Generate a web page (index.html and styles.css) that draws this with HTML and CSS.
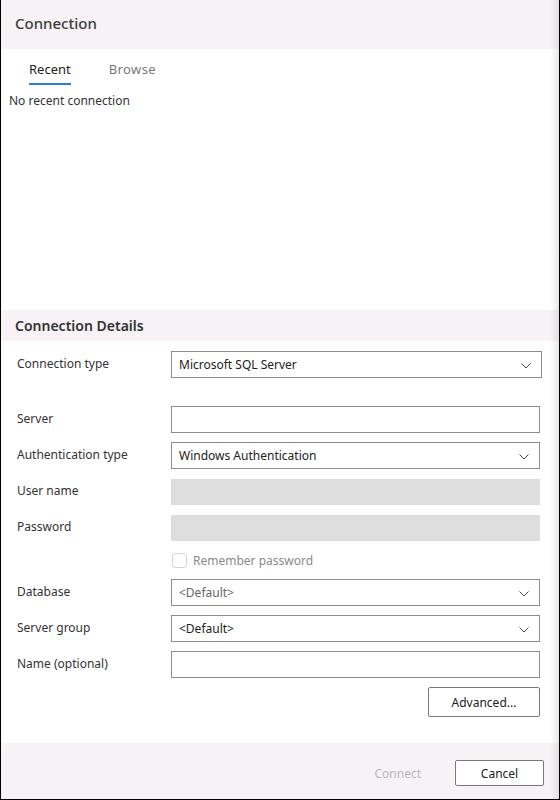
FILE: index.html
```html
<!DOCTYPE html>
<html>
<head>
<meta charset="utf-8">
<link rel="stylesheet" href="styles.css">
</head>
<body>
<div class="dialog">
  <div class="title-bar">Connection</div>
  <div class="tabs">
    <div class="tab active">Recent</div>
    <div class="tab">Browse</div>
  </div>
  <div class="recent">No recent connection</div>
  <div class="section-title">Connection Details</div>
  <div class="form">
    <div class="row">
      <div class="label">Connection type</div>
      <div class="control select wide"><span>Microsoft SQL Server</span><svg class="chev" width="10" height="6" viewBox="0 0 10 6"><path d="M0.5 0.5 L5 5 L9.5 0.5" fill="none" stroke="#444" stroke-width="1"/></svg></div>
    </div>
    <div class="row spaced">
      <div class="label">Server</div>
      <div class="control input"></div>
    </div>
    <div class="row">
      <div class="label">Authentication type</div>
      <div class="control select"><span>Windows Authentication</span><svg class="chev" width="10" height="6" viewBox="0 0 10 6"><path d="M0.5 0.5 L5 5 L9.5 0.5" fill="none" stroke="#444" stroke-width="1"/></svg></div>
    </div>
    <div class="row">
      <div class="label">User name</div>
      <div class="control disabled"></div>
    </div>
    <div class="row">
      <div class="label">Password</div>
      <div class="control disabled"></div>
    </div>
    <div class="row check-row">
      <div class="label"></div>
      <div class="check"><span class="box"></span><span class="check-text">Remember password</span></div>
    </div>
    <div class="row">
      <div class="label">Database</div>
      <div class="control select"><span class="muted">&lt;Default&gt;</span><svg class="chev" width="10" height="6" viewBox="0 0 10 6"><path d="M0.5 0.5 L5 5 L9.5 0.5" fill="none" stroke="#444" stroke-width="1"/></svg></div>
    </div>
    <div class="row">
      <div class="label">Server group</div>
      <div class="control select"><span>&lt;Default&gt;</span><svg class="chev" width="10" height="6" viewBox="0 0 10 6"><path d="M0.5 0.5 L5 5 L9.5 0.5" fill="none" stroke="#444" stroke-width="1"/></svg></div>
    </div>
    <div class="row">
      <div class="label">Name (optional)</div>
      <div class="control input"></div>
    </div>
    <div class="adv-row">
      <button class="btn adv">Advanced...</button>
    </div>
  </div>
  <div class="footer">
    <span class="connect">Connect</span>
    <button class="btn cancel">Cancel</button>
  </div>
</div>
</body>
</html>
```

FILE: styles.css
```css
* { box-sizing: border-box; }
html, body { margin: 0; padding: 0; }
body {
  width: 560px;
  height: 800px;
  font-family: "Noto Sans", "Open Sans", sans-serif;
  color: #333;
  background: #fff;
}
.dialog {
  position: relative;
  width: 560px;
  height: 800px;
  border-left: 1px solid #000;
  border-right: 1px solid #000;
  border-bottom: 1px solid #000;
  display: flex;
  flex-direction: column;
  overflow: hidden;
}
.dialog::after {
  content: "";
  position: absolute;
  top: 0;
  right: 0;
  width: 9px;
  height: 100%;
  background: linear-gradient(to right, rgba(0,0,0,0), rgba(0,0,0,0.09));
}
.title-bar {
  height: 49px;
  background: #f6f2f6;
  padding-left: 14px;
  font-size: 15px;
  font-weight: 500;
  line-height: 46px;
  color: #3c3c3c;
}
.tabs {
  display: flex;
  padding-left: 28px;
  height: 38px;
  padding-top: 10px;
  gap: 38px;
}
.tab {
  font-size: 13px;
  color: #7a7a7a;
  height: 26px;
  line-height: 21px;
  letter-spacing: 0.4px;
}
.tab.active {
  color: #222;
  letter-spacing: 0;
  border-bottom: 2px solid #2b7cd3;
}
.recent {
  font-size: 12px;
  color: #333;
  padding-left: 8px;
  padding-top: 1px;
  line-height: 26px;
  height: 223px;
}
.section-title {
  height: 31px;
  background: #f6f2f6;
  padding-left: 14px;
  font-size: 14px;
  font-weight: 600;
  line-height: 31px;
  color: #333;
}
.form {
  flex: 1;
  padding: 10px 0 0 0;
  display: flex;
  flex-direction: column;
  gap: 9px;
}
.row {
  display: flex;
  align-items: center;
  height: 27px;
}
.row.spaced { margin-top: 19px; }
.label {
  width: 170px;
  padding-left: 16px;
  padding-bottom: 2px;
  font-size: 12px;
  color: #333;
  flex-shrink: 0;
}
.control {
  width: 369px;
  height: 27px;
  font-size: 12px;
}
.control.wide { width: 371px; }
.input, .select {
  border: 1px solid #8c8c8c;
  background: #fff;
}
.select {
  display: flex;
  align-items: center;
  justify-content: space-between;
  padding: 0 10px 0 7px;
  color: #222;
}
.select .muted { color: #666; }
.chev { flex-shrink: 0; margin-top: 3px; }
.disabled {
  background: #dedede;
  height: 26px;
}
.check-row { height: 20px; }
.check {
  display: flex;
  align-items: center;
  gap: 6px;
  padding-left: 1px;
}
.box {
  width: 15px;
  height: 15px;
  border: 1px solid #d6d6d6;
  border-radius: 3px;
  background: #fff;
}
.check-text {
  font-size: 12px;
  color: #8a8a8a;
}
.adv-row {
  display: flex;
  justify-content: flex-end;
  padding-right: 19px;
}
.btn {
  font-family: "Noto Sans", "Open Sans", sans-serif;
  font-size: 12px;
  color: #222;
  background: #fff;
  border: 1px solid #7a7a7a;
  border-radius: 2px;
  padding: 0;
}
.adv {
  width: 112px;
  height: 30px;
}
.footer {
  height: 56px;
  background: #f6f2f6;
  display: flex;
  align-items: center;
  justify-content: flex-end;
  padding-right: 15px;
  padding-top: 4px;
}
.connect {
  font-size: 12px;
  color: #b8b8b8;
  margin-right: 34px;
}
.cancel {
  width: 89px;
  height: 26px;
}
```
